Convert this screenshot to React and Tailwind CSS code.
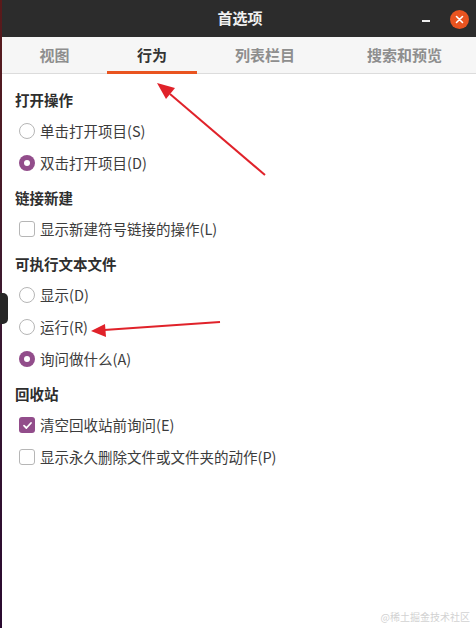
import React from 'react';

const font = { fontFamily: '"Noto Sans CJK SC", "Noto Sans", sans-serif' };

const Radio = ({ checked }) =>
  checked ? (
    <span className="w-[16px] h-[16px] rounded-full bg-[#924d8b] flex items-center justify-center shrink-0">
      <span className="w-[6px] h-[6px] rounded-full bg-white" />
    </span>
  ) : (
    <span className="w-[16px] h-[16px] rounded-full border border-[#b6b6b6] bg-white shrink-0" />
  );

const Check = ({ checked }) =>
  checked ? (
    <span className="w-[16px] h-[16px] rounded-[3px] bg-[#924d8b] flex items-center justify-center shrink-0">
      <svg width="11" height="11" viewBox="0 0 11 11">
        <path d="M2 5.6 L4.4 8 L9 3" fill="none" stroke="white" strokeWidth="1.8" strokeLinecap="round" strokeLinejoin="round" />
      </svg>
    </span>
  ) : (
    <span className="w-[16px] h-[16px] rounded-[3px] border border-[#b6b6b6] bg-white shrink-0" />
  );

const Option = ({ type, checked, label, first }) => (
  <div className={`h-[20px] flex items-center gap-[5px] pl-[4px] ${first ? 'mt-[11px]' : 'mt-[12px]'}`}>
    {type === 'radio' ? <Radio checked={checked} /> : <Check checked={checked} />}
    <span className="text-[14.5px] text-[#3c3c3c] leading-[20px]">{label}</span>
  </div>
);

const Section = ({ title, items, first }) => (
  <div className={first ? 'mt-[16px]' : 'mt-[15px]'}>
    <div className="h-[20px] leading-[20px] text-[14.5px] font-bold text-[#2e2e2e]">{title}</div>
    {items.map((it, i) => (
      <Option key={it.label} {...it} first={i === 0} />
    ))}
  </div>
);

const sections = [
  {
    title: '打开操作',
    items: [
      { type: 'radio', label: '单击打开项目(S)' },
      { type: 'radio', checked: true, label: '双击打开项目(D)' },
    ],
  },
  {
    title: '链接新建',
    items: [{ type: 'check', label: '显示新建符号链接的操作(L)' }],
  },
  {
    title: '可执行文本文件',
    items: [
      { type: 'radio', label: '显示(D)' },
      { type: 'radio', label: '运行(R)' },
      { type: 'radio', checked: true, label: '询问做什么(A)' },
    ],
  },
  {
    title: '回收站',
    items: [
      { type: 'check', checked: true, label: '清空回收站前询问(E)' },
      { type: 'check', label: '显示永久删除文件或文件夹的动作(P)' },
    ],
  },
];

const tabs = [
  { label: '视图', w: 'w-[105px]' },
  { label: '行为', w: 'w-[90px]', active: true },
  { label: '列表栏目', w: 'w-[136px]' },
  { label: '搜索和预览', w: 'flex-1' },
];

export default function App() {
  return (
    <div className="relative w-[476px] h-[628px] flex overflow-hidden bg-white" style={font}>
      <div className="w-[2px] bg-gradient-to-b from-[#5a1a1a] via-[#3a1830] to-[#2a0a30]" />

      <div className="flex-1 flex flex-col">
        <div className="h-[37px] bg-[#2c2c2c] flex items-center relative">
          <div className="flex-1 text-center text-[15px] font-bold text-[#f0f0f0] pl-[2px]">首选项</div>
          <div className="absolute right-[46px] top-[20px] w-[8px] h-[2px] bg-[#eeeeee]" />
          <div className="absolute right-[7px] top-[10px] w-[19px] h-[19px] rounded-full bg-[#e95420] flex items-center justify-center">
            <svg width="9" height="9" viewBox="0 0 9 9">
              <path d="M1.5 1.5 L7.5 7.5 M7.5 1.5 L1.5 7.5" stroke="white" strokeWidth="1.6" strokeLinecap="round" />
            </svg>
          </div>
        </div>

        <div className="h-[37px] bg-[#f6f6f6] border-b border-[#dcdcdc] flex">
          {tabs.map((t) => (
            <div key={t.label} className={`${t.w} relative flex items-center justify-center`}>
              <span className={`text-[15px] font-bold ${t.active ? 'text-[#333333]' : 'text-[#8e8e8e]'}`}>{t.label}</span>
              {t.active && <div className="absolute left-0 right-0 bottom-[-1px] h-[3px] bg-[#e95420]" />}
            </div>
          ))}
        </div>

        <div className="flex-1 bg-white pl-[13px]">
          {sections.map((s, i) => (
            <Section key={s.title} {...s} first={i === 0} />
          ))}
        </div>
      </div>

      <div className="absolute left-0 top-[293px] w-[8px] h-[31px] rounded-r-[5px] bg-[#262626]" />

      <svg className="absolute inset-0 pointer-events-none" width="476" height="628">
        <line x1="265" y1="175" x2="170" y2="94" stroke="#e0222a" strokeWidth="2" />
        <polygon points="157,83 175,88 166,99" fill="#e0222a" />
        <line x1="220" y1="322" x2="104" y2="330" stroke="#e0222a" strokeWidth="2" />
        <polygon points="91,331 105,324 106,337" fill="#e0222a" />
      </svg>

      <div className="absolute right-[6px] bottom-[4px] text-[10px] text-[#d2d2d2]" style={{ fontFamily: '"Noto Sans CJK SC", serif' }}>@稀土掘金技术社区</div>
    </div>
  );
}
